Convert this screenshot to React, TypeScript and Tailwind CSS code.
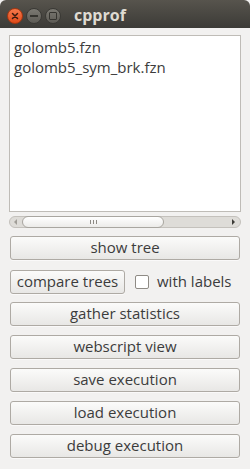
import React from "react";

const font = { fontFamily: '"Open Sans", "DejaVu Sans", sans-serif' };

function Btn({ label, className = "" }: { label: string; className?: string }) {
  return (
    <button
      type="button"
      className={`flex h-[24px] items-center justify-center rounded-[3px] border border-[#aeaaa4] bg-gradient-to-b from-[#fbfbfa] to-[#e8e7e5] text-[15px] leading-none text-[#3c3c3c] shadow-[0_1px_0_rgba(255,255,255,0.6)] ${className}`}
    >
      <span className="-mt-[2px]">{label}</span>
    </button>
  );
}

function WinBtn({ kind }: { kind: "close" | "min" | "max" }) {
  if (kind === "close") {
    return (
      <div className="flex h-[16px] w-[16px] items-center justify-center rounded-full border border-[#a8360f] bg-gradient-to-b from-[#f5784a] to-[#df4a16]">
        <svg width="8" height="8" viewBox="0 0 8 8">
          <path d="M1.5 1.5 L6.5 6.5 M6.5 1.5 L1.5 6.5" stroke="#3a1a0e" strokeWidth="1.5" strokeLinecap="round" />
        </svg>
      </div>
    );
  }
  return (
    <div className="flex h-[16px] w-[16px] items-center justify-center rounded-full border border-[#3a3935] bg-gradient-to-b from-[#7b7972] to-[#5d5b55]">
      {kind === "min" ? (
        <div className="h-[2px] w-[8px] bg-[#35342f]" />
      ) : (
        <div className="h-[8px] w-[8px] rounded-[1px] border-[1.5px] border-[#35342f]" />
      )}
    </div>
  );
}

export default function App() {
  return (
    <div className="flex h-[469px] w-[250px] flex-col overflow-hidden bg-[#f2f1f0]" style={font}>
      {/* title bar */}
      <div className="flex h-[28px] items-center rounded-t-[6px] bg-gradient-to-b from-[#57544d] to-[#3c3b37] pl-[7px] pt-[4px]">
        <div className="flex gap-[3px]">
          <WinBtn kind="close" />
          <WinBtn kind="min" />
          <WinBtn kind="max" />
        </div>
        <span className="-mt-[2px] ml-[13px] text-[16px] font-bold text-[#dfdbd2]">cpprof</span>
      </div>

      <div className="flex flex-col px-[9px] pt-[7px]">
        {/* file list */}
        <div className="h-[177px] border border-[#bfbcb7] bg-white px-[4px] pt-[1px] text-[15px] leading-[20px] text-[#3c3c3c]">
          <div>golomb5.fzn</div>
          <div>golomb5_sym_brk.fzn</div>
        </div>

        {/* scrollbar */}
        <div className="mt-[4px] flex h-[12px] items-center rounded-full border border-[#c4c1bc] bg-[#dedcd8]">
          <div className="flex w-[12px] justify-center">
            <svg width="4" height="6" viewBox="0 0 4 6">
              <path d="M3 0 L0 3 L3 6 Z" fill="#a19e98" />
            </svg>
          </div>
          <div className="flex h-[12px] w-[142px] items-center justify-center rounded-full border border-[#a9a6a0] bg-gradient-to-b from-[#ffffff] to-[#ecebe9]">
            <div className="flex gap-[2px]">
              <div className="h-[4px] w-px bg-[#8d8a84]" />
              <div className="h-[4px] w-px bg-[#8d8a84]" />
              <div className="h-[4px] w-px bg-[#8d8a84]" />
            </div>
          </div>
          <div className="flex-1" />
          <div className="flex w-[12px] justify-center">
            <svg width="4" height="6" viewBox="0 0 4 6">
              <path d="M0 0 L3 3 L0 6 Z" fill="#3c3b37" />
            </svg>
          </div>
        </div>

        <div className="flex flex-col px-px">
          <Btn label="show tree" className="mt-[8px]" />
          <div className="mt-[10px] flex items-center">
            <Btn label="compare trees" className="w-[115px]" />
            <div className="ml-[10px] h-[14px] w-[14px] rounded-[2px] border border-[#8f8b85] bg-white" />
            <span className="-mt-[2px] ml-[8px] text-[15px] text-[#3c3c3c]">with labels</span>
          </div>
          <Btn label="gather statistics" className="mt-[8px]" />
          <Btn label="webscript view" className="mt-[9px]" />
          <Btn label="save execution" className="mt-[9px]" />
          <Btn label="load execution" className="mt-[9px]" />
          <Btn label="debug execution" className="mt-[9px]" />
        </div>
      </div>
    </div>
  );
}
